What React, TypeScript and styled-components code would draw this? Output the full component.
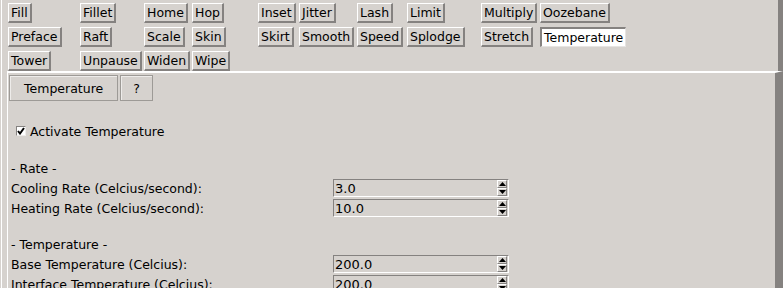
import React from 'react';
import styled, { createGlobalStyle } from 'styled-components';

const BG = '#d6d2ce';
const DARK = '#858280';

const GlobalStyle = createGlobalStyle`
    html, body {
        margin: 0;
        padding: 0;
        background: ${BG};
    }
    body {
        font-family: 'DejaVu Sans', Verdana, sans-serif;
        font-size: 12.5px;
        color: #000;
    }
`;

const Window = styled.div`
    width: 782px;
    height: 288px;
    margin-left: 1px;
    border-left: 1px solid #fff;
    box-sizing: border-box;
    overflow: hidden;
    display: flex;
    flex-direction: column;
`;

const ToolGrid = styled.div`
    height: 73px;
    box-sizing: border-box;
    padding: 3px 0 0 6px;
    border-right: 5px solid ${DARK};
    display: grid;
    grid-template-columns: 72px 64px 48px 66px 41px 58px 50px 74px 59px 1fr;
    grid-auto-rows: 20px;
    row-gap: 4px;
    justify-items: start;
`;

const ToolButton = styled.button<{ $selected?: boolean }>`
    height: 20px;
    box-sizing: border-box;
    padding: 1px 2px;
    margin: 0;
    font: inherit;
    line-height: 15px;
    color: #000;
    white-space: nowrap;
    background: ${(p) => (p.$selected ? '#fff' : BG)};
    border-style: solid;
    border-width: ${(p) => (p.$selected ? '2px 1px 1px 2px' : '1px 2px 2px 1px')};
    border-color: ${(p) => (p.$selected ? `${DARK} #e6e4e2 #e6e4e2 ${DARK}` : `#fff ${DARK} ${DARK} #fff`)};
    cursor: pointer;
`;

const Notebook = styled.div`
    flex: 1;
    margin-left: 5px;
    border-top: 2px solid #fff;
    border-left: 1px solid #fff;
    border-right: 8px solid ${DARK};
    padding: 2px 0 0 1px;
`;

const PageTabs = styled.div`
    display: flex;
    gap: 2px;
`;

const PageTab = styled.button<{ $pad: number }>`
    height: 26px;
    box-sizing: border-box;
    padding: 0 ${(p) => p.$pad}px;
    margin: 0;
    font: inherit;
    color: #000;
    background: ${BG};
    border: 1px solid #9d9a96;
    box-shadow: inset 1px 1px 0 #eeecea;
`;

const Options = styled.div`
    padding-left: 1px;
`;

const CheckRow = styled.label`
    display: flex;
    align-items: center;
    height: 20px;
    margin-top: 20px;
    padding-left: 6px;
    gap: 4px;
`;

const CheckBox = styled.span`
    width: 10px;
    height: 10px;
    box-sizing: border-box;
    background: #fff;
    border-top: 1px solid ${DARK};
    border-left: 1px solid ${DARK};
    border-bottom: 1px solid #eeecea;
    border-right: 1px solid #eeecea;
    display: flex;
    align-items: center;
    justify-content: center;
`;

const Form = styled.div<{ $top: number }>`
    display: grid;
    grid-template-columns: 322px 176px;
    grid-auto-rows: 20px;
    margin-top: ${(p) => p.$top}px;
    padding-left: 1px;
`;

const Label = styled.div`
    display: flex;
    align-items: center;
    white-space: nowrap;
`;

const Heading = styled(Label)`
    grid-column: 1 / span 2;
`;

const Spin = styled.div`
    height: 18px;
    margin-top: 1px;
    box-sizing: border-box;
    display: flex;
    align-items: center;
    background: ${BG};
    border-top: 1px solid ${DARK};
    border-left: 1px solid ${DARK};
    border-bottom: 1px solid #fff;
    border-right: 1px solid #fff;
`;

const SpinValue = styled.span`
    flex: 1;
    padding-left: 1px;
    font-size: 13px;
`;

const Arrows = styled.div`
    display: flex;
    flex-direction: column;
    width: 10px;
    margin-right: 1px;
`;

const Arrow = styled.div`
    height: 8px;
    box-sizing: border-box;
    border-top: 1px solid #fff;
    border-left: 1px solid #fff;
    border-bottom: 1px solid ${DARK};
    border-right: 1px solid ${DARK};
    display: flex;
    align-items: center;
    justify-content: center;
`;

const Triangle = ({ down }: { down?: boolean }) => (
    <svg width="7" height="4" viewBox="0 0 7 4">
        <path d={down ? 'M0 0h7L3.5 4z' : 'M0 4h7L3.5 0z'} fill="#000" />
    </svg>
);

const SpinBox = ({ value }: { value: string }) => (
    <Spin>
        <SpinValue>{value}</SpinValue>
        <Arrows>
            <Arrow>
                <Triangle />
            </Arrow>
            <Arrow>
                <Triangle down />
            </Arrow>
        </Arrows>
    </Spin>
);

const tools: (string | null)[][] = [
    ['Fill', 'Fillet', 'Home', 'Hop', 'Inset', 'Jitter', 'Lash', 'Limit', 'Multiply', 'Oozebane'],
    ['Preface', 'Raft', 'Scale', 'Skin', 'Skirt', 'Smooth', 'Speed', 'Splodge', 'Stretch', 'Temperature'],
    ['Tower', 'Unpause', 'Widen', 'Wipe', null, null, null, null, null, null],
];

export default function App() {
    return (
        <>
            <GlobalStyle />
            <Window>
                <ToolGrid>
                    {tools.map((row, r) =>
                        row.map((name, c) =>
                            name ? (
                                <ToolButton
                                    key={name}
                                    $selected={name === 'Temperature'}
                                    style={{ gridRow: r + 1, gridColumn: c + 1 }}
                                >
                                    {name}
                                </ToolButton>
                            ) : null
                        )
                    )}
                </ToolGrid>
                <Notebook>
                    <PageTabs>
                        <PageTab $pad={14}>Temperature</PageTab>
                        <PageTab $pad={12}>?</PageTab>
                    </PageTabs>
                    <Options>
                        <CheckRow>
                            <CheckBox>
                                <svg width="8" height="8" viewBox="0 0 8 8">
                                    <path d="M1 4l2 2.5L7 1" stroke="#000" strokeWidth="2" fill="none" />
                                </svg>
                            </CheckBox>
                            Activate Temperature
                        </CheckRow>
                        <Form $top={17}>
                            <Heading>- Rate -</Heading>
                            <Label>Cooling Rate (Celcius/second):</Label>
                            <SpinBox value="3.0" />
                            <Label>Heating Rate (Celcius/second):</Label>
                            <SpinBox value="10.0" />
                        </Form>
                        <Form $top={16}>
                            <Heading>- Temperature -</Heading>
                            <Label>Base Temperature (Celcius):</Label>
                            <SpinBox value="200.0" />
                            <Label>Interface Temperature (Celcius):</Label>
                            <SpinBox value="200.0" />
                        </Form>
                    </Options>
                </Notebook>
            </Window>
        </>
    );
}
